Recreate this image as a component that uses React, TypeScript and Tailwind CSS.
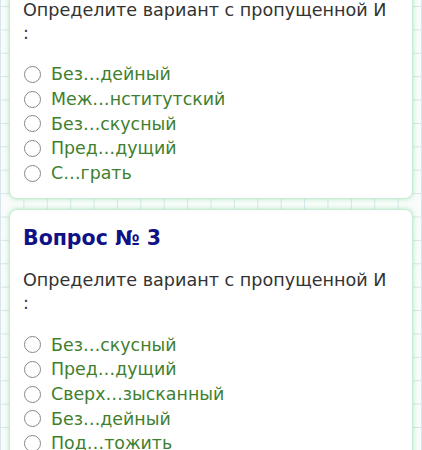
import React from "react";

interface Question {
  num: number;
  text: string;
  options: string[];
}

const questions: Question[] = [
  {
    num: 2,
    text: "Определите вариант с пропущенной И",
    options: ["Без…дейный", "Меж…нститутский", "Без…скусный", "Пред…дущий", "С…грать"],
  },
  {
    num: 3,
    text: "Определите вариант с пропущенной И",
    options: ["Без…скусный", "Пред…дущий", "Сверх…зысканный", "Без…дейный", "Под…тожить"],
  },
];

function QuestionCard({ q }: { q: Question }) {
  return (
    <div className="bg-white rounded-[8px] border border-[#c5eed2] shadow-[0_0_5px_rgba(120,215,150,0.55)] pl-[13px] pr-3 pt-[16px] pb-[13px]">
      <div className="text-[20.5px] leading-[24px] font-bold text-[#0f1286]">Вопрос № {q.num}</div>
      <div className="mt-[19px] text-[17.6px] leading-[23px] text-[#333]">
        {q.text}
        <br />:
      </div>
      <div className="mt-[17px] flex flex-col">
        {q.options.map((opt) => (
          <label key={opt} className="flex items-center h-[24.7px] text-[17.4px] text-[#3f7f2f]">
            <span className="ml-[1px] mr-[10px] w-[17px] h-[17px] rounded-full border-[1.6px] border-[#888] bg-white shrink-0" />
            {opt}
          </label>
        ))}
      </div>
    </div>
  );
}

export default function App() {
  return (
    <div
      className="w-[422px] h-[450px] overflow-hidden bg-[#f9fcfb] [background-image:linear-gradient(#d6e6eb_1px,transparent_1px),linear-gradient(90deg,#d6e6eb_1px,transparent_1px)] [background-size:23.4px_23.4px] [background-position:0_6px]"
      style={{ fontFamily: '"DejaVu Sans", Verdana, sans-serif' }}
    >
      <div className="-mt-[61px] pl-[9px] pr-[9px] flex flex-col gap-[10px]">
        {questions.map((q) => (
          <QuestionCard key={q.num} q={q} />
        ))}
      </div>
    </div>
  );
}
